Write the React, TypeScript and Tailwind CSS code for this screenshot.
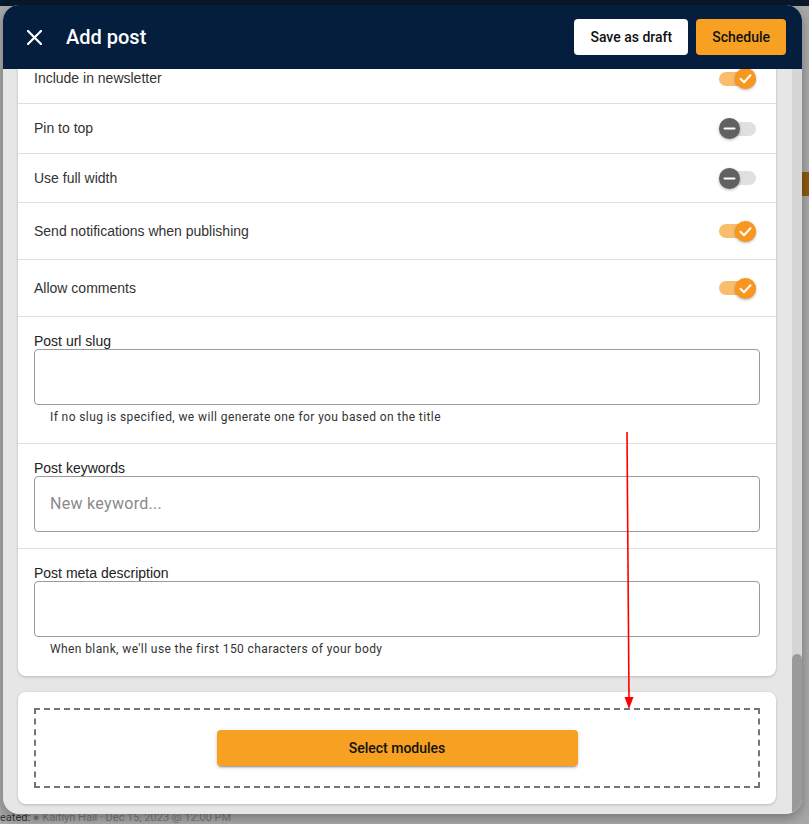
import React from 'react';

const rowFont = { fontFamily: '"Liberation Sans", Arial, sans-serif' };

function Toggle({ on }: { on: boolean }) {
  return (
    <div className="relative w-[37px] h-[21px] flex items-center">
      <div className={`w-full h-[14px] rounded-full ${on ? 'bg-[#f9bd6c]' : 'bg-[#e0e0e0]'}`} />
      <div
        className={`absolute top-0 w-[21px] h-[21px] rounded-full flex items-center justify-center shadow-[0_1px_3px_rgba(0,0,0,0.3)] ${
          on ? 'right-0 bg-[#f7971f]' : 'left-0 bg-[#616161]'
        }`}
      >
        {on ? (
          <svg width="21" height="21" viewBox="0 0 21 21" fill="none">
            <polyline points="5.5,10.8 9,14.2 15.5,7.2" stroke="white" strokeWidth="2" strokeLinecap="round" strokeLinejoin="round" />
          </svg>
        ) : (
          <svg width="21" height="21" viewBox="0 0 21 21" fill="none">
            <line x1="5.5" y1="10.5" x2="15.5" y2="10.5" stroke="white" strokeWidth="2" strokeLinecap="round" />
          </svg>
        )}
      </div>
    </div>
  );
}

function SwitchRow({ label, on, height }: { label: string; on: boolean; height: string }) {
  return (
    <div className={`flex items-center justify-between pl-4 pr-5 border-b border-[#e0e0e0] ${height}`}>
      <span className="text-[14px] text-[#333]" style={rowFont}>
        {label}
      </span>
      <Toggle on={on} />
    </div>
  );
}

function FieldSection({
  label,
  placeholder,
  helper,
  height,
  last,
}: {
  label: string;
  placeholder?: string;
  helper?: string;
  height: string;
  last?: boolean;
}) {
  return (
    <div className={`px-4 pt-4 ${height} ${last ? '' : 'border-b border-[#e0e0e0]'}`}>
      <div className="text-[14px] leading-4 text-[#222]" style={rowFont}>
        {label}
      </div>
      <div className="h-[56px] border border-[#9a9a9a] rounded-[4px] flex items-center pl-[15px]">
        {placeholder && (
          <span className="font-['Roboto'] text-[16px] tracking-[0.3px] text-[#8a8a8a]">{placeholder}</span>
        )}
      </div>
      {helper && (
        <div className="mt-[4px] ml-4 font-['Roboto'] text-[12px] leading-4 tracking-[0.4px] text-[#333]">{helper}</div>
      )}
    </div>
  );
}

export default function App() {
  return (
    <div className="relative w-[809px] h-[824px] overflow-hidden bg-[#a8a8a8] font-['Roboto']">
      {/* dimmed page behind the dialog */}
      <div className="h-[6px] bg-[#0a182b]" />
      <div className="absolute right-0 top-[172px] w-[7px] h-[24px] bg-[#8a5a12]" />
      <div className="absolute left-0 top-[811px] text-[11px] leading-[13px] text-[#333] whitespace-nowrap">
        eated: <span className="text-[#777]">● Kaitlyn Hall · Dec 15, 2023 @ 12:00 PM</span>
      </div>

      {/* dialog */}
      <div className="absolute left-[3px] top-[5px] w-[799px] h-[809px] rounded-[16px] overflow-hidden bg-[#e6e6e6] flex flex-col shadow-[0_4px_12px_rgba(0,0,0,0.3)]">
        <div className="h-[64px] shrink-0 bg-[#061e3d] flex items-center pl-[24px] pr-[16px]">
          <svg width="15" height="15" viewBox="0 0 15 15" className="mr-[24px]">
            <path d="M1 1 L14 14 M14 1 L1 14" stroke="white" strokeWidth="2.2" strokeLinecap="round" />
          </svg>
          <h1 className="text-white text-[20px] font-medium">Add post</h1>
          <div className="ml-auto flex gap-2">
            <button className="h-[36px] px-4 bg-white rounded-[4px] text-[14px] font-medium text-[#111]">Save as draft</button>
            <button className="h-[36px] px-4 bg-[#f7a021] rounded-[4px] text-[14px] font-medium text-[#111]">Schedule</button>
          </div>
        </div>

        <div className="flex flex-1 min-h-0">
          <div className="flex-1 overflow-hidden pl-[15px] pr-4">
            <div className="-mt-[15px] bg-white rounded-b-[8px] shadow-[0_1px_3px_rgba(0,0,0,0.2)]">
              <SwitchRow label="Include in newsletter" on height="h-[50px]" />
              <SwitchRow label="Pin to top" on={false} height="h-[50px]" />
              <SwitchRow label="Use full width" on={false} height="h-[49px]" />
              <SwitchRow label="Send notifications when publishing" on height="h-[57px]" />
              <SwitchRow label="Allow comments" on height="h-[57px]" />
              <FieldSection
                label="Post url slug"
                helper="If no slug is specified, we will generate one for you based on the title"
                height="h-[127px]"
              />
              <FieldSection label="Post keywords" placeholder="New keyword..." height="h-[105px]" />
              <FieldSection
                label="Post meta description"
                helper="When blank, we'll use the first 150 characters of your body"
                height="h-[127px]"
                last
              />
            </div>

            <div className="mt-4 bg-white rounded-[8px] p-4 shadow-[0_1px_3px_rgba(0,0,0,0.2)]">
              <div className="h-[80px] border-2 border-dashed border-[#757575] flex items-center justify-center">
                <button className="w-[361px] h-[36px] bg-[#f7a021] rounded-[4px] text-[14px] font-medium text-[#111] shadow-[0_3px_1px_-2px_rgba(0,0,0,0.2),0_2px_2px_0_rgba(0,0,0,0.14),0_1px_5px_0_rgba(0,0,0,0.12)]">
                  Select modules
                </button>
              </div>
            </div>
          </div>

          {/* scrollbar */}
          <div className="w-[10px] bg-[#d6d6d6] flex flex-col justify-end">
            <div className="h-[160px] bg-[#9a9a9a] rounded-t-full" />
          </div>
        </div>
      </div>

      {/* red annotation arrow */}
      <svg className="absolute left-0 top-0 pointer-events-none" width="809" height="824">
        <line x1="627" y1="432" x2="629" y2="698" stroke="#ff0000" strokeWidth="1.6" />
        <polygon points="624.5,697 633.5,697 629,709" fill="#ff0000" />
      </svg>
    </div>
  );
}
